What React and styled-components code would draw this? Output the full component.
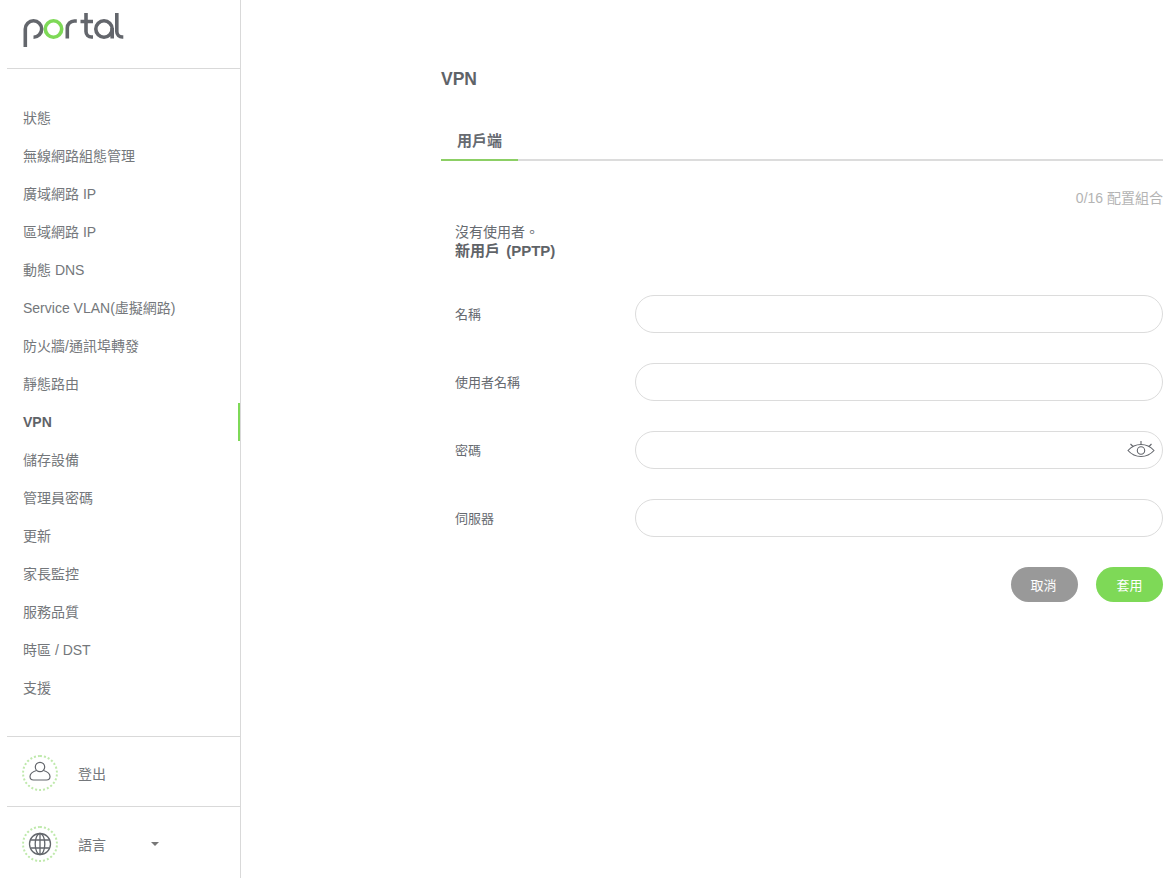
import React from "react";
import styled, { createGlobalStyle } from "styled-components";

const GlobalStyle = createGlobalStyle`
  html, body {
    margin: 0;
    padding: 0;
    background: #fff;
  }
  body {
    font-family: "Liberation Sans", "Noto Sans CJK TC", sans-serif;
    color: #666a70;
  }
  * {
    box-sizing: border-box;
  }
`;

const Page = styled.div`
  display: flex;
  height: 878px;
  overflow: hidden;
`;

const Sidebar = styled.aside`
  width: 241px;
  flex: none;
  height: 100%;
  border-right: 1px solid #d9d9d9;
  padding-left: 7px;
  display: flex;
  flex-direction: column;
`;

const LogoBar = styled.div`
  height: 69px;
  flex: none;
  border-bottom: 1px solid #d9d9d9;
  padding: 12px 0 0 15px;
`;

const Menu = styled.nav`
  height: 667px;
  flex: none;
  padding-top: 30px;
  display: flex;
  flex-direction: column;
`;

const MenuItem = styled.a`
  height: 38px;
  flex: none;
  margin-left: -7px;
  padding-left: 23px;
  padding-bottom: ${(p) => (p.$active ? "0" : "2px")};
  display: flex;
  align-items: center;
  font-size: 14px;
  font-weight: ${(p) => (p.$active ? 700 : 400)};
  color: ${(p) => (p.$active ? "#5f6368" : "#74777b")};
  border-right: ${(p) => (p.$active ? "2px solid #7ed957" : "none")};
`;

const FooterRow = styled.div`
  height: ${(p) => p.$height}px;
  flex: none;
  border-top: 1px solid #d9d9d9;
  margin-right: ${(p) => (p.$wide ? "-1px" : "0")};
  padding: 2px 0 0 15px;
  display: flex;
  align-items: center;
  font-size: 14px;
  color: #74777b;
`;

const IconRing = styled.span`
  width: 36px;
  height: 36px;
  flex: none;
  border-radius: 50%;
  border: 2px dotted #bfe9ac;
  margin-right: 20px;
  display: flex;
  align-items: center;
  justify-content: center;
`;

const Caret = styled.span`
  width: 0;
  height: 0;
  margin-left: 45px;
  border-left: 4px solid transparent;
  border-right: 4px solid transparent;
  border-top: 4px solid #777;
`;

const Main = styled.main`
  flex: 1;
  padding: 69px 10px 0 200px;
`;

const Title = styled.h1`
  margin: 0;
  font-size: 17.5px;
  line-height: 20px;
  font-weight: 700;
  color: #5f6368;
`;

const Tabs = styled.div`
  display: flex;
  margin-top: 32px;
  border-bottom: 2px solid #dcdcdc;
`;

const Tab = styled.div`
  width: 77px;
  height: 40px;
  margin-bottom: -2px;
  padding-left: 16px;
  font-size: 15px;
  font-weight: 700;
  line-height: 40px;
  color: #666a70;
  border-bottom: 2px solid #8ccf65;
`;

const Count = styled.div`
  margin-top: 27px;
  text-align: right;
  font-size: 14px;
  line-height: 20px;
  color: #b4b4b4;
`;

const Section = styled.section`
  padding-left: 14px;
`;

const Empty = styled.div`
  margin-top: 14px;
  font-size: 14px;
  line-height: 20px;
  color: #666a70;
`;

const SectionTitle = styled.div`
  margin-top: -1px;
  font-size: 15px;
  font-weight: 700;
  word-spacing: 2px;
  line-height: 20px;
  color: #5f6368;
`;

const Form = styled.form`
  margin-top: 34px;
  display: flex;
  flex-direction: column;
  gap: 30px;
`;

const Row = styled.div`
  display: flex;
  align-items: center;
  height: 38px;
`;

const Label = styled.label`
  width: 180px;
  flex: none;
  padding-bottom: 2px;
  font-size: 13px;
  color: #666a70;
`;

const Field = styled.div`
  flex: 1;
  position: relative;
  height: 38px;
`;

const Input = styled.input`
  width: 100%;
  height: 100%;
  padding: 0 40px 0 16px;
  border: 1px solid #dcdcdc;
  border-radius: 19px;
  background: #fff;
  outline: none;
  font-family: inherit;
  font-size: 14px;
  color: #666a70;
`;

const EyeButton = styled.span`
  position: absolute;
  right: 8px;
  top: 9px;
  display: flex;
`;

const Actions = styled.div`
  display: flex;
  justify-content: flex-end;
  gap: 18px;
`;

const Button = styled.button`
  width: 67px;
  height: 35px;
  border: none;
  border-radius: 18px;
  padding: ${(p) => (p.$primary ? "0" : "0 2px 0 0")};
  background: ${(p) => (p.$primary ? "#7ed957" : "#999999")};
  color: #fff;
  font-family: inherit;
  font-size: 13px;
  cursor: pointer;
`;

const menuItems = [
  "狀態",
  "無線網路組態管理",
  "廣域網路 IP",
  "區域網路 IP",
  "動態 DNS",
  "Service VLAN(虛擬網路)",
  "防火牆/通訊埠轉發",
  "靜態路由",
  "VPN",
  "儲存設備",
  "管理員密碼",
  "更新",
  "家長監控",
  "服務品質",
  "時區 / DST",
  "支援",
];

const Logo = () => (
  <svg width="104" height="38" viewBox="0 0 104 38" fill="none" strokeWidth="3.600">
    <g stroke="#63666c">
      <path d="M3.300 35V17a8.200 8.200 0 1 1 8.200 8.200" />
      <path d="M45.300 26.500V16a7 7 0 0 1 7-7h2.500" />
      <path d="M64 1v18.500a5.500 5.500 0 0 0 5.500 5.500h1.500M58.500 9.500H71" />
      <circle cx="82" cy="17" r="8.200" />
      <path d="M90.200 16v10.500" />
      <path d="M94.800 1v18.500a5.500 5.500 0 0 0 5.500 5.500h1" />
    </g>
    <circle cx="31.500" cy="17" r="8.200" stroke="#7ed957" />
  </svg>
);

const UserIcon = () => (
  <svg width="22" height="24" viewBox="0 0 22 24" fill="none" stroke="#63666c" strokeWidth="1.200">
    <circle cx="11" cy="6" r="4.700" />
    <path d="M7.500 9.500C4 10.500 1 12.500 1 15.500c0 2 1.500 3.500 3.500 3.500h13c2 0 3.500-1.500 3.500-3.500 0-3-3-5-6.500-6" />
  </svg>
);

const GlobeIcon = () => (
  <svg width="24" height="24" viewBox="0 0 24 24" fill="none" stroke="#63666c" strokeWidth="1.300">
    <circle cx="12" cy="12" r="10.500" />
    <ellipse cx="12" cy="12" rx="4.800" ry="10.500" />
    <path d="M12 1.500v21M2.500 8h19M2.500 16h19" />
  </svg>
);

const EyeIcon = () => (
  <svg width="28" height="20" viewBox="0 0 28 20" fill="none" stroke="#63666c" strokeWidth="1.100">
    <path d="M1 10.500C5 6 9 4.500 14 4.500s9 1.500 13 6c-4 4.500-8 6-13 6s-9-1.500-13-6z" />
    <circle cx="14" cy="10.500" r="3.700" />
    <path d="M14 4.500V1M6 6.500 3.500 4M22 6.500 24.500 4" />
  </svg>
);

const App = () => (
  <Page>
    <GlobalStyle />
    <Sidebar>
      <LogoBar>
        <Logo />
      </LogoBar>
      <Menu>
        {menuItems.map((item) => (
          <MenuItem key={item} $active={item === "VPN"}>
            {item}
          </MenuItem>
        ))}
      </Menu>
      <FooterRow $height={70} $wide>
        <IconRing>
          <UserIcon />
        </IconRing>
        登出
      </FooterRow>
      <FooterRow $height={72}>
        <IconRing>
          <GlobeIcon />
        </IconRing>
        語言
        <Caret />
      </FooterRow>
    </Sidebar>
    <Main>
      <Title>VPN</Title>
      <Tabs>
        <Tab>用戶端</Tab>
      </Tabs>
      <Count>0/16 配置組合</Count>
      <Section>
        <Empty>沒有使用者。</Empty>
        <SectionTitle>新用戶 (PPTP)</SectionTitle>
        <Form>
          <Row>
            <Label>名稱</Label>
            <Field>
              <Input type="text" />
            </Field>
          </Row>
          <Row>
            <Label>使用者名稱</Label>
            <Field>
              <Input type="text" />
            </Field>
          </Row>
          <Row>
            <Label>密碼</Label>
            <Field>
              <Input type="password" />
              <EyeButton>
                <EyeIcon />
              </EyeButton>
            </Field>
          </Row>
          <Row>
            <Label>伺服器</Label>
            <Field>
              <Input type="text" />
            </Field>
          </Row>
          <Actions>
            <Button type="button">取消</Button>
            <Button type="button" $primary>
              套用
            </Button>
          </Actions>
        </Form>
      </Section>
    </Main>
  </Page>
);

export default App;
